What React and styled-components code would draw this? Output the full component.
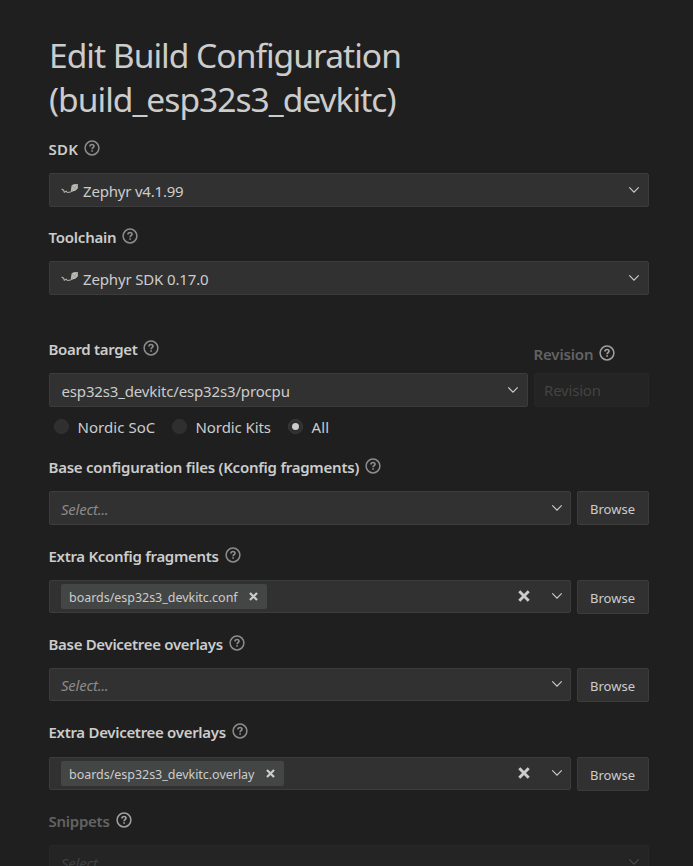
import React from "react";
import styled, { createGlobalStyle, css } from "styled-components";

const GlobalStyle = createGlobalStyle`
  html, body { margin: 0; background: #1f1f1f; overflow: hidden; }
  * { box-sizing: border-box; }
`;

const Page = styled.main`
  height: 866px;
  overflow: hidden;
  padding: 33px 44px 0 49px;
  background: #1f1f1f;
  color: #cccccc;
  font-family: "Noto Sans", "Open Sans", sans-serif;
  font-size: 15px;
  white-space: nowrap;
`;

const Title = styled.h1`
  margin: 0 0 13px;
  font-size: 33.6px;
  line-height: 44px;
  font-weight: 400;
`;

const TitleLine = styled.span`
  display: block;
  letter-spacing: ${(p) => p.$spacing}px;
`;

const Field = styled.section`
  height: ${(p) => p.$height}px;
`;

const Label = styled.div`
  display: flex;
  align-items: center;
  height: 30px;
  margin: 0 0 9px -0.5px;
  padding-top: ${(p) => p.$drop || 0}px;
  gap: 6px;
  font-weight: 600;
  color: ${(p) => (p.$disabled ? "#636363" : "#cccccc")};
`;

const Text = styled.span`
  letter-spacing: ${(p) => p.$spacing || 0}px;
`;

const HelpSvg = styled.svg`
  width: 16px;
  height: 16px;
  flex: none;
  margin-top: -3px;
  color: ${(p) => (p.$bright ? "#a0a0a0" : "#8c8c8c")};
`;

const Row = styled.div`
  display: flex;
  align-items: flex-start;
  gap: 6px;
`;

const surface = css`
  background: #313131;
  border: 1px solid #3c3c3c;
  border-radius: 2px;
`;

const Select = styled.div`
  ${surface}
  display: flex;
  align-items: center;
  flex: 1;
  min-width: 0;
  height: ${(p) => p.$height || 34}px;
  padding: 0 ${(p) => p.$inset || 8}px 0 11.5px;
  ${(p) => p.$disabled && css`
    background: #242424;
    border-color: #272727;
    color: #434343;
  `}
`;

const Value = styled.div`
  display: flex;
  align-items: center;
  flex: 1;
  padding-top: 2px;
`;

const Placeholder = styled(Value)`
  padding-top: 1px;
  margin-left: -0.5px;
  font-style: italic;
  font-size: 15px;
  color: ${(p) => (p.$disabled ? "#404040" : "#8a8a8a")};
`;

const KiteSvg = styled.svg`
  width: 18px;
  height: 12px;
  margin: -5px 4px 0 -0.5px;
  flex: none;
`;

const ChevronSvg = styled.svg`
  width: 12px;
  height: 8px;
  flex: none;
  margin: -1px 0 0 ${(p) => (p.$spaced ? 21 : 0)}px;
`;

const ClearSvg = styled.svg`
  width: ${(p) => p.$size}px;
  height: ${(p) => p.$size}px;
  flex: none;
  margin-top: -1px;
  color: #cccccc;
`;

const Chip = styled.span`
  display: flex;
  align-items: center;
  justify-content: space-between;
  width: ${(p) => p.$width}px;
  height: 25px;
  margin-left: -0.5px;
  margin-top: -1px;
  padding: 2px 9px 0 8px;
  border-radius: 2px;
  background: #434645;
  font-size: 12.5px;
`;

const Spacer = styled.span`
  flex: 1;
`;

const Button = styled.button`
  ${surface}
  width: 72px;
  height: 34px;
  padding: 1px 1px 0 0;
  color: #cccccc;
  font-family: inherit;
  font-size: 13px;
  letter-spacing: 0.05px;
`;

const BoardColumn = styled.div`
  width: 479px;
`;

const RevisionColumn = styled.div`
  width: 115px;
`;

const RevisionInput = styled(Select)`
  padding-left: 9px;
`;

const Radios = styled.div`
  display: flex;
  align-items: center;
  height: 40px;
  padding-left: 5px;
`;

const Radio = styled.label`
  display: flex;
  align-items: center;
  gap: 8.5px;
  width: ${(p) => p.$width}px;
`;

const RadioDot = styled.span`
  display: grid;
  place-items: center;
  width: 15px;
  height: 15px;
  margin-top: -2px;
  border-radius: 50%;
  background: #2f2f2f;
  border: 1px solid ${(p) => (p.$checked ? "#3c3c3c" : "#333333")};

  &::after {
    content: "";
    width: 7px;
    height: 7px;
    border-radius: 50%;
    background: ${(p) => (p.$checked ? "#cccccc" : "transparent")};
  }
`;

function Help({ bright }) {
  return (
    <HelpSvg $bright={bright} viewBox="0 0 16 16" fill="none" stroke="currentColor">
      <circle cx="8" cy="8" r="6.9" strokeWidth="1.5" />
      <path d="M6 6.4C6 5 6.9 4.5 8 4.5s2 .7 2 1.7c0 1.4-1.9 1.6-1.9 3" strokeWidth="1.7" />
      <path d="M8.1 10.2v1.6" strokeWidth="1.7" />
    </HelpSvg>
  );
}

function Kite() {
  return (
    <KiteSvg viewBox="0 0 18 12">
      <path d="M10.6 2.4 12.6 1.2 17 .9 16.7 5.6 14.6 7.6 9.6 9.2Z" fill="#bdbdb8" />
      <path d="M9.6 9.2 17 .9M11 3 16 6.6" stroke="#8e8e8a" strokeWidth=".6" />
      <path d="M.6 6 2.6 7.2 3.3 9.2 5.2 8.2 6.4 9.5 9.8 9" fill="none" stroke="#b0b0ac" strokeWidth="1.1" />
    </KiteSvg>
  );
}

function Chevron({ spaced, disabled }) {
  return (
    <ChevronSvg $spaced={spaced} viewBox="0 0 12 8" fill="none" stroke={disabled ? "#484848" : "#cccccc"}>
      <path d="M1.3 1.4 6 6.1l4.7-4.7" strokeWidth="1.2" />
    </ChevronSvg>
  );
}

function Cross({ size }) {
  return (
    <ClearSvg $size={size} viewBox="0 0 12 12" fill="none" stroke="currentColor">
      <path d="m1.3 1.3 9.4 9.4m0-9.4-9.4 9.4" strokeWidth="2.9" />
    </ClearSvg>
  );
}

function FieldLabel({ children, spacing, disabled, drop }) {
  return (
    <Label $disabled={disabled} $drop={drop}>
      <Text $spacing={spacing}>{children}</Text>
      <Help bright={disabled} />
    </Label>
  );
}

const fileFields = [
  { label: "Base configuration files (Kconfig fragments)", spacing: -0.24, height: 89 },
  { label: "Extra Kconfig fragments", spacing: -0.3, height: 88, file: "boards/esp32s3_devkitc.conf", chip: 206, box: 33 },
  { label: "Base Devicetree overlays", spacing: -0.31, height: 88, box: 33 },
  { label: "Extra Devicetree overlays", spacing: -0.3, height: 89, file: "boards/esp32s3_devkitc.overlay", chip: 223, box: 33, extra: 1 },
];

const FileRow = styled(Row)`
  padding-top: ${(p) => p.$extra || 0}px;
`;

function FileField({ field }) {
  return (
    <Field $height={field.height}>
      <FieldLabel spacing={field.spacing}>{field.label}</FieldLabel>
      <FileRow $extra={field.extra}>
        <Select $height={field.box} $inset={7}>
          {field.file ? (
            <>
              <Chip $width={field.chip}>
                <Text $spacing={-0.03}>{field.file}</Text>
                <Cross size={9} />
              </Chip>
              <Spacer />
              <Cross size={12} />
            </>
          ) : (
            <Placeholder><Text $spacing={-0.25}>Select...</Text></Placeholder>
          )}
          <Chevron spaced={!!field.file} />
        </Select>
        <Button>Browse</Button>
      </FileRow>
    </Field>
  );
}

export default function App() {
  return (
    <Page>
      <GlobalStyle />
      <Title>
        <TitleLine $spacing={-1}>Edit Build Configuration</TitleLine>
        <TitleLine $spacing={-1}>(build_esp32s3_devkitc)</TitleLine>
      </Title>
      <Field $height={88}>
        <FieldLabel spacing={0.2}>SDK</FieldLabel>
        <Select>
          <Value><Kite /><Text $spacing={-0.2}>Zephyr v4.1.99</Text></Value>
          <Chevron />
        </Select>
      </Field>
      <Field $height={112}>
        <FieldLabel spacing={-0.22}>Toolchain</FieldLabel>
        <Select>
          <Value><Kite /><Text $spacing={-0.15}>Zephyr SDK 0.17.0</Text></Value>
          <Chevron />
        </Select>
      </Field>
      <Field $height={118}>
        <Row>
          <BoardColumn>
            <FieldLabel spacing={-0.33}>Board target</FieldLabel>
            <Select>
              <Value><Text $spacing={-0.15}>esp32s3_devkitc/esp32s3/procpu</Text></Value>
              <Chevron />
            </Select>
          </BoardColumn>
          <RevisionColumn>
            <FieldLabel spacing={-0.15} disabled drop={10}>Revision</FieldLabel>
            <RevisionInput $disabled><Text $spacing={-0.2}>Revision</Text></RevisionInput>
          </RevisionColumn>
        </Row>
        <Radios>
          <Radio $width={118}><RadioDot /><Text $spacing={0.05}>Nordic SoC</Text></Radio>
          <Radio $width={116}><RadioDot /><Text $spacing={-0.08}>Nordic Kits</Text></Radio>
          <Radio $width={60}><RadioDot $checked /><Text $spacing={0.1}>All</Text></Radio>
        </Radios>
      </Field>
      {fileFields.map((field) => <FileField key={field.label} field={field} />)}
      <Field $height={88}>
        <FieldLabel spacing={-0.25} disabled>Snippets</FieldLabel>
        <Select $disabled>
          <Placeholder $disabled><Text $spacing={-0.25}>Select...</Text></Placeholder>
          <Chevron disabled />
        </Select>
      </Field>
    </Page>
  );
}
